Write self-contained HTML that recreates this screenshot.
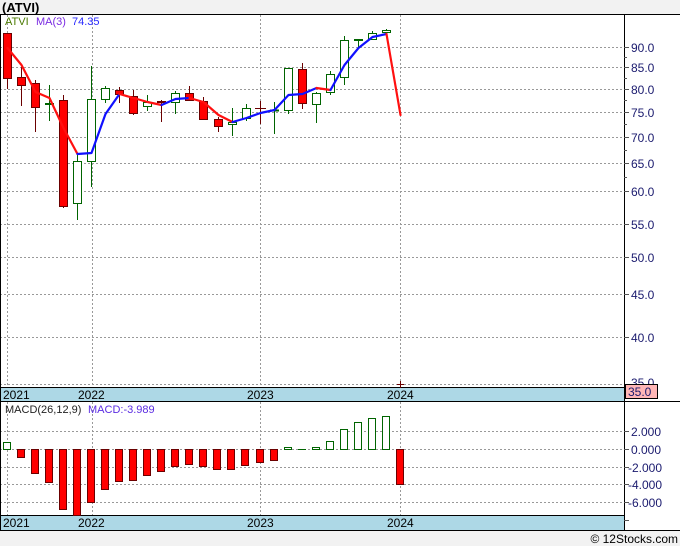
<!DOCTYPE html>
<html><head><meta charset="utf-8"><style>
html,body{margin:0;padding:0;background:#fff;width:680px;height:546px;overflow:hidden}
svg{display:block;font-family:"Liberation Sans","DejaVu Sans",sans-serif}
</style></head><body>
<svg width="680" height="546" viewBox="0 0 680 546" xmlns="http://www.w3.org/2000/svg">
<rect x="0" y="0" width="680" height="14" fill="#f2f2f2"/>
<rect x="0" y="530" width="680" height="16" fill="#f2f2f2"/>
<text x="2" y="12" font-size="13" font-weight="bold" fill="#000">(ATVI)</text>
<text x="678" y="543" font-size="12" text-anchor="end" fill="#000">© 12Stocks.com</text>

<g stroke="#999" stroke-width="1" stroke-dasharray="2,2" shape-rendering="crispEdges">
<line x1="0" y1="47.5" x2="624" y2="47.5"/>
<line x1="0" y1="67.5" x2="624" y2="67.5"/>
<line x1="0" y1="89.5" x2="624" y2="89.5"/>
<line x1="0" y1="112.5" x2="624" y2="112.5"/>
<line x1="0" y1="137.5" x2="624" y2="137.5"/>
<line x1="0" y1="163.5" x2="624" y2="163.5"/>
<line x1="0" y1="191.5" x2="624" y2="191.5"/>
<line x1="0" y1="224.5" x2="624" y2="224.5"/>
<line x1="0" y1="257.5" x2="624" y2="257.5"/>
<line x1="0" y1="294.5" x2="624" y2="294.5"/>
<line x1="0" y1="337.5" x2="624" y2="337.5"/>
<line x1="0" y1="384.5" x2="624" y2="384.5"/>
<line x1="7.5" y1="15" x2="7.5" y2="387"/>
<line x1="92.5" y1="15" x2="92.5" y2="387"/>
<line x1="260.5" y1="15" x2="260.5" y2="387"/>
<line x1="400.5" y1="15" x2="400.5" y2="387"/>
<line x1="7.5" y1="402" x2="7.5" y2="515"/>
<line x1="92.5" y1="402" x2="92.5" y2="515"/>
<line x1="260.5" y1="402" x2="260.5" y2="515"/>
<line x1="400.5" y1="402" x2="400.5" y2="515"/>
<line x1="0" y1="431.5" x2="624" y2="431.5"/>
<line x1="0" y1="449.5" x2="624" y2="449.5"/>
<line x1="0" y1="467.5" x2="624" y2="467.5"/>
<line x1="0" y1="484.5" x2="624" y2="484.5"/>
<line x1="0" y1="502.5" x2="624" y2="502.5"/>
</g>

<!-- axis bars -->
<rect x="0" y="387" width="624" height="14" fill="#add8e6"/>
<rect x="0" y="515" width="624" height="15" fill="#add8e6"/>
<g stroke="#000" stroke-width="1" shape-rendering="crispEdges" fill="none">
<line x1="0" y1="14.5" x2="680" y2="14.5"/>
<line x1="0.5" y1="14" x2="0.5" y2="530"/>
<line x1="624.5" y1="14" x2="624.5" y2="530"/>
<line x1="0" y1="387.5" x2="624" y2="387.5"/>
<line x1="0" y1="401.5" x2="680" y2="401.5"/>
<line x1="0" y1="515.5" x2="624" y2="515.5"/>
<line x1="0" y1="530.5" x2="680" y2="530.5"/>
</g>
<g stroke="#555" shape-rendering="crispEdges">
<line x1="624" y1="47.5" x2="629" y2="47.5"/><line x1="624" y1="67.5" x2="629" y2="67.5"/>
<line x1="624" y1="89.5" x2="629" y2="89.5"/><line x1="624" y1="112.5" x2="629" y2="112.5"/>
<line x1="624" y1="137.5" x2="629" y2="137.5"/><line x1="624" y1="163.5" x2="629" y2="163.5"/>
<line x1="624" y1="191.5" x2="629" y2="191.5"/><line x1="624" y1="224.5" x2="629" y2="224.5"/>
<line x1="624" y1="257.5" x2="629" y2="257.5"/><line x1="624" y1="294.5" x2="629" y2="294.5"/>
<line x1="624" y1="337.5" x2="629" y2="337.5"/>
<line x1="624" y1="57.5" x2="627" y2="57.5"/><line x1="624" y1="78.5" x2="627" y2="78.5"/>
<line x1="624" y1="100.5" x2="627" y2="100.5"/><line x1="624" y1="124.5" x2="627" y2="124.5"/>
<line x1="624" y1="150.5" x2="627" y2="150.5"/><line x1="624" y1="177.5" x2="627" y2="177.5"/>
<line x1="624" y1="431.5" x2="629" y2="431.5"/><line x1="624" y1="449.5" x2="629" y2="449.5"/>
<line x1="624" y1="467.5" x2="629" y2="467.5"/><line x1="624" y1="484.5" x2="629" y2="484.5"/>
<line x1="624" y1="502.5" x2="629" y2="502.5"/><line x1="624" y1="520.5" x2="629" y2="520.5"/>
</g>
<g font-size="12" fill="#1a1a6e">
<text x="631" y="52">90.0</text><text x="631" y="72">85.0</text><text x="631" y="94">80.0</text>
<text x="631" y="117">75.0</text><text x="631" y="142">70.0</text><text x="631" y="168">65.0</text>
<text x="631" y="196">60.0</text><text x="631" y="229">55.0</text><text x="631" y="262">50.0</text>
<text x="631" y="299">45.0</text><text x="631" y="342">40.0</text><text x="631" y="387">35.0</text>
<text x="631" y="436">2.000</text><text x="631" y="454">0.000</text><text x="628" y="472">-2.000</text>
<text x="628" y="489">-4.000</text><text x="628" y="507">-6.000</text>
</g>
<rect x="625.5" y="384.5" width="32" height="14" fill="#ffb6b6" stroke="#000" shape-rendering="crispEdges"/>
<text x="628" y="396" font-size="12" fill="#1a1a6e">35.0</text>

<g font-size="12" fill="#000">
<text x="3" y="399">2021</text><text x="78" y="399">2022</text><text x="247" y="399">2023</text><text x="387" y="399">2024</text>
<text x="3" y="527">2021</text><text x="78" y="527">2022</text><text x="247" y="527">2023</text><text x="387" y="527">2024</text>
</g>
<g font-size="11">
<text x="5" y="25" fill="#4a7a00">ATVI</text>
<text x="36" y="25" fill="#7a2be2">MA(3)</text>
<text x="72" y="25" fill="#2828ff">74.35</text>
<text x="5" y="413" fill="#222">MACD(26,12,9)</text>
<text x="88" y="413" fill="#5a2be2">MACD:-3.989</text>
</g>

<!-- candles -->
<g shape-rendering="crispEdges" stroke-width="1">
<g stroke="#6b0000" fill="#ff0000">
<line x1="7.5" y1="33" x2="7.5" y2="89"/><rect x="3.5" y="33.5" width="8" height="45"/>
<line x1="21.5" y1="67" x2="21.5" y2="106"/><rect x="17.5" y="77.5" width="8" height="8"/>
<line x1="35.5" y1="80" x2="35.5" y2="132"/><rect x="31.5" y="83.5" width="8" height="24"/>
<line x1="63.5" y1="95" x2="63.5" y2="208"/><rect x="59.5" y="100.5" width="8" height="106"/>
<line x1="119.5" y1="87" x2="119.5" y2="103"/><rect x="115.5" y="90.5" width="8" height="4"/>
<line x1="133.5" y1="90" x2="133.5" y2="115"/><rect x="129.5" y="96.5" width="8" height="17"/>
<line x1="161.5" y1="100" x2="161.5" y2="122"/><rect x="157.5" y="101.5" width="8" height="1"/>
<line x1="189.5" y1="86" x2="189.5" y2="101"/><rect x="185.5" y="93.5" width="8" height="7"/>
<line x1="203.5" y1="97" x2="203.5" y2="119"/><rect x="199.5" y="101.5" width="8" height="18"/>
<line x1="218.5" y1="117" x2="218.5" y2="132"/><rect x="214.5" y="119.5" width="8" height="7"/>
<line x1="260.5" y1="101" x2="260.5" y2="124"/><line x1="255" y1="108.5" x2="266" y2="108.5"/>
<line x1="302.5" y1="63" x2="302.5" y2="109"/><rect x="298.5" y="69.5" width="8" height="34"/>
<line x1="400.5" y1="381" x2="400.5" y2="388"/><line x1="397" y1="384.5" x2="404" y2="384.5"/>
</g>
<g stroke="#006400" fill="#fff">
<line x1="49.5" y1="85" x2="49.5" y2="121"/><rect x="45.5" y="103.5" width="8" height="1" fill="#006400"/>
<line x1="77.5" y1="155" x2="77.5" y2="220"/><rect x="73.5" y="161.5" width="8" height="42"/>
<line x1="91.5" y1="66" x2="91.5" y2="187"/><rect x="87.5" y="99.5" width="8" height="62"/>
<line x1="105.5" y1="86" x2="105.5" y2="103"/><rect x="101.5" y="88.5" width="8" height="11"/>
<line x1="147.5" y1="95" x2="147.5" y2="111"/><rect x="143.5" y="102.5" width="8" height="4"/>
<line x1="175.5" y1="91" x2="175.5" y2="114"/><rect x="171.5" y="93.5" width="8" height="9"/>
<line x1="232.5" y1="108" x2="232.5" y2="136"/><rect x="228.5" y="122.5" width="8" height="2"/>
<line x1="246.5" y1="104" x2="246.5" y2="121"/><rect x="242.5" y="108.5" width="8" height="10"/>
<line x1="274.5" y1="102" x2="274.5" y2="134"/><line x1="270" y1="110.5" x2="279" y2="110.5" stroke-width="2"/>
<line x1="288.5" y1="68" x2="288.5" y2="114"/><rect x="284.5" y="68.5" width="8" height="42"/>
<line x1="316.5" y1="92" x2="316.5" y2="123"/><rect x="312.5" y="93.5" width="8" height="11"/>
<line x1="330.5" y1="71" x2="330.5" y2="95"/><rect x="326.5" y="74.5" width="8" height="18"/>
<line x1="344.5" y1="36" x2="344.5" y2="85"/><rect x="340.5" y="40.5" width="8" height="37"/>
<line x1="358.5" y1="39" x2="358.5" y2="47"/><line x1="354" y1="40" x2="363" y2="40" stroke-width="2"/>
<line x1="372.5" y1="31" x2="372.5" y2="40"/><rect x="368.5" y="33.5" width="8" height="6"/>
<line x1="386.5" y1="29" x2="386.5" y2="33"/><rect x="382.5" y="30.5" width="8" height="2"/>
</g>
</g>

<!-- MA line -->
<g fill="none" stroke-width="2.2" stroke-linejoin="round" stroke-linecap="round">
<polyline stroke="#ff1010" points="7.5,48 21.5,65 35.5,92 49.5,98 63.5,128 77.5,154"/>
<polyline stroke="#1010ff" points="77.5,154 91.5,153 105.5,114 119.5,94"/>
<polyline stroke="#ff1010" points="119.5,94 133.5,98 147.5,102 161.5,105"/>
<polyline stroke="#1010ff" points="161.5,105 175.5,99 189.5,98"/>
<polyline stroke="#ff1010" points="189.5,98 203.5,102 218.5,115 232.5,122"/>
<polyline stroke="#1010ff" points="232.5,122 246.5,118 260.5,113 274.5,110 288.5,95 302.5,94 316.5,88"/>
<polyline stroke="#ff1010" points="316.5,88 330.5,90"/>
<polyline stroke="#1010ff" points="330.5,90 344.5,65 358.5,48 372.5,37 386.5,34"/>
<polyline stroke="#ff1010" points="386.5,34 400.5,115"/>
</g>

<!-- MACD -->
<g shape-rendering="crispEdges">
<g fill="#ff0000" stroke="#6b0000">
<rect x="17.5" y="449.5" width="7" height="8"/>
<rect x="31.5" y="449.5" width="7" height="24"/>
<rect x="45.5" y="449.5" width="7" height="33"/>
<rect x="59.5" y="449.5" width="7" height="60"/>
<rect x="73.5" y="449.5" width="7" height="66"/>
<rect x="87.5" y="449.5" width="7" height="53"/>
<rect x="101.5" y="449.5" width="7" height="40"/>
<rect x="115.5" y="449.5" width="7" height="32"/>
<rect x="129.5" y="449.5" width="7" height="31"/>
<rect x="143.5" y="449.5" width="7" height="26"/>
<rect x="157.5" y="449.5" width="7" height="22"/>
<rect x="171.5" y="449.5" width="7" height="17"/>
<rect x="185.5" y="449.5" width="7" height="15"/>
<rect x="199.5" y="449.5" width="7" height="17"/>
<rect x="213.5" y="449.5" width="7" height="20"/>
<rect x="227.5" y="449.5" width="7" height="20"/>
<rect x="241.5" y="449.5" width="7" height="16"/>
<rect x="256.5" y="449.5" width="7" height="13"/>
<rect x="270.5" y="449.5" width="7" height="11"/>
<rect x="396.5" y="449.5" width="7" height="35"/>
</g>
<g fill="#fff" stroke="#006400">
<rect x="3.5" y="442.5" width="7" height="7"/>
<rect x="284.5" y="447.5" width="7" height="2"/>
<line x1="298" y1="449.5" x2="306" y2="449.5"/>
<rect x="312.5" y="447.5" width="7" height="2"/>
<rect x="326.5" y="441.5" width="7" height="8"/>
<rect x="340.5" y="429.5" width="7" height="20"/>
<rect x="354.5" y="422.5" width="7" height="27"/>
<rect x="368.5" y="418.5" width="7" height="31"/>
<rect x="382.5" y="416.5" width="7" height="33"/>
</g>
</g>
</svg>
</body></html>
